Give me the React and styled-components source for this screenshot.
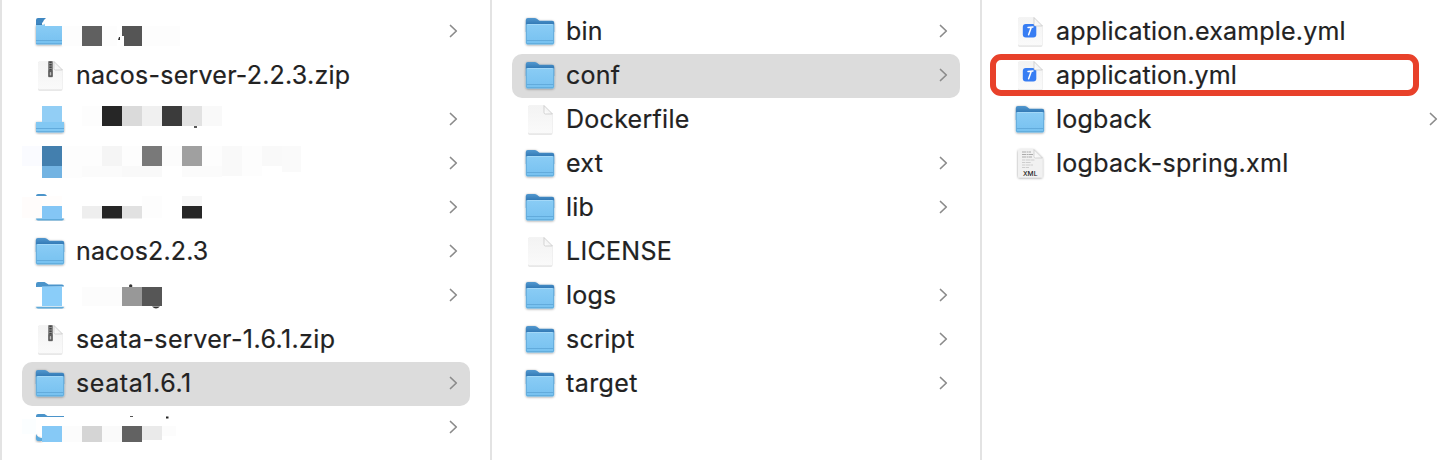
import React from "react";
import styled, { createGlobalStyle } from "styled-components";

const GlobalStyle = createGlobalStyle`
  * { box-sizing: border-box; }
  body { margin: 0; background: #fff; overflow: hidden; }
`;

const Browser = styled.main`
  display: grid;
  grid-template-columns: 490px 490px 490px;
  width: 1448px;
  height: 460px;
  overflow: hidden;
  background: #fff;
  color: #222;
  font-family: Inter, "Liberation Sans", sans-serif;
`;

const Column = styled.section`
  display: flex;
  flex-direction: column;
  padding: 10px 20px 0;
  border-left: 2px solid #e3e3e3;
`;

const Row = styled.div`
  position: relative;
  display: flex;
  flex: none;
  align-items: center;
  height: 44px;
  padding: 0 11px 0 12px;
  border-radius: 10px;
  background: ${(p) => (p.$selected ? "#dcdcdc" : "transparent")};
`;

const Icon = styled.svg`
  flex: none;
  width: 32px;
  height: 44px;
  overflow: visible;
`;

const Label = styled.span`
  margin-left: 10px;
  padding-bottom: 2px;
  font-size: 25px;
  font-weight: 400;
  line-height: 42px;
  letter-spacing: ${(p) => p.$spacing ?? 0.24}px;
  white-space: nowrap;
  -webkit-text-stroke: 0.2px #222;
`;

const Arrow = styled.svg`
  flex: none;
  width: 10px;
  height: 16px;
  margin-left: auto;
  margin-bottom: 2px;
`;

const Redacted = styled.svg`
  flex: none;
  width: 300px;
  height: 44px;
  margin-left: -12px;
`;

const Outline = styled.div`
  position: absolute;
  top: 0;
  left: -12px;
  width: 429px;
  height: 42px;
  border: 6px solid #e8412a;
  border-radius: 11px;
`;

const Gradients = styled.svg`
  position: absolute;
  width: 0;
  height: 0;
`;

const Defs = () => (
  <Gradients aria-hidden="true">
    <defs>
      <linearGradient id="front" x1="0" y1="0" x2="0" y2="1">
        <stop offset="0" stopColor="#8accf5" />
        <stop offset="1" stopColor="#76c1f0" />
      </linearGradient>
      <linearGradient id="back" x1="0" y1="0" x2="0" y2="1">
        <stop offset="0" stopColor="#5298cf" />
        <stop offset=".45" stopColor="#3279b5" />
      </linearGradient>
      <linearGradient id="paper" x1="0" y1="0" x2="0" y2="1">
        <stop offset="0" stopColor="#f3f3f3" />
        <stop offset="1" stopColor="#fafafa" />
      </linearGradient>
      <linearGradient id="fold" x1="0" y1="1" x2="1" y2="0">
        <stop offset="0" stopColor="#ffffff" />
        <stop offset="0.5" stopColor="#f2f2f2" />
        <stop offset="0.52" stopColor="#ffffff" />
      </linearGradient>
      <filter id="shade" x="-20%" y="-20%" width="140%" height="140%">
        <feDropShadow dx="0" dy="0.6" stdDeviation="0.8" floodColor="#000" floodOpacity="0.42" />
      </filter>
      <filter id="softShade" x="-20%" y="-20%" width="140%" height="140%">
        <feDropShadow dx="0" dy="0.5" stdDeviation="0.7" floodColor="#000" floodOpacity="0.36" />
      </filter>
    </defs>
  </Gradients>
);

const FolderIcon = () => (
  <Icon viewBox="0 0 32 44">
    <g filter="url(#shade)">
      <path d="M1.800 10q0-2 2-2h6.700q1.500 0 2.700 1l1.500 1.200q.8.500 2 .5H28.200q2 0 2 2V22H1.800z" fill="url(#back)" />
      <rect x="1.800" y="14" width="28.400" height="20.500" rx="1.800" fill="url(#front)" />
    </g>
    <path d="M2.500 15v18M29.500 15v18" stroke="#62a9d9" strokeWidth=".8" />
    <path d="M3.500 14.500h25" stroke="#a3d8f8" strokeWidth="1" />
    <path d="M2.500 30.500h27" stroke="#62abdc" strokeWidth="1" />
    <path d="M2.500 33.700h27" stroke="#5faad9" strokeWidth="1" />
  </Icon>
);

const DocumentIcon = ({ kind }) => (
  <Icon viewBox="0 0 32 44">
    <path
      d="M5.500 7.500H20L28.500 16V34q0 1.500-1.500 1.500H5.500Q4 35.500 4 34V9q0-1.500 1.500-1.500z"
      fill={kind === "xml" ? "#f1f1f1" : "url(#paper)"}
      filter={kind === "xml" ? "url(#shade)" : "url(#softShade)"}
    />
    {kind === "zip" && (
      <g>
        <rect x="14" y="7" width="5" height="16.300" rx="1" fill="#8a8a8a" />
        <path d="M16.500 7.500v9" stroke="#444" strokeWidth="2.400" strokeDasharray="1.500 1" />
        <rect x="14.500" y="16" width="4" height="7" rx="1" fill="#5e5e5e" />
        <rect x="15.800" y="18" width="1.400" height="3.500" rx=".7" fill="#bbb" />
      </g>
    )}
    {kind === "xml" && (
      <g>
        <path d="M8 10h9M8 12.500h11M8 15h10" stroke="#ababab" strokeWidth="1" strokeDasharray="4 .6 2 .4" />
        <path d="M8 18h13M8 20.500h9M8 23h11M8 25.500h7" stroke="#cdcdcd" strokeWidth="1" strokeDasharray="3 .6 5 .5" />
        <text x="16.200" y="34" textAnchor="middle" fontFamily="Inter, sans-serif" fontSize="6.600" fontWeight="500" fill="#222">XML</text>
      </g>
    )}
    {kind === "yml" && (
      <g>
        <rect x="8.800" y="14" width="13.500" height="13.500" rx="3" fill="#377df3" />
        <path d="M14 17.500l5-.6M17.300 17.200l-2.700 7.600" stroke="#fff" strokeWidth="1.500" strokeLinecap="round" />
      </g>
    )}
    <path d="M20 7.500V14.500q0 1.500 1.500 1.500h7z" fill="url(#fold)" stroke="#c4c4c4" strokeWidth=".7" />
  </Icon>
);

const Chevron = () => (
  <Arrow viewBox="0 0 10 16">
    <path d="M1.500 2.500L7.300 8l-5.800 5.500" fill="none" stroke="#8b8b8b" strokeWidth="1.700" strokeLinecap="round" strokeLinejoin="round" />
  </Arrow>
);

/* Each pixelated name is a list of [x, y, width, height, fill] cells inside its row. */
const mosaics = {
  a: {
    under: (
      <g>
        <path d="M14 10q0-2 2-2h8v2l-4 3v4h-6z" fill="#3f87c1" />
        <path d="M14 15h7l2-1v2h17v18.500H15q-1 0-1-1z" fill="url(#front)" filter="url(#shade)" />
        <path d="M14 30.500h26M14 33.700h26" stroke="#62abdc" />
        <path d="M25 7q-3 2-5 7h1l2-1v3h20V7z" fill="#fff" />
        <path d="M96 30l1-3h1v3z" fill="#333" />
      </g>
    ),
    cells: [[40, 16, 20, 20, "#fdfdfd"], [60, 16, 20, 20, "#606060"], [80, 16, 15, 20, "#fdfdfd"], [100, 16, 20, 20, "#555555"], [100, 26, 2, 10, "#ffffff"], [120, 16, 38, 20, "#fdfdfd"]],
  },
  b: {
    under: (
      <g>
        <path d="M14 24h28v8.500q0 2-2 2H16q-2 0-2-2z" fill="#82c8f3" filter="url(#shade)" />
        <path d="M14 30.500h28M14 33.700h28" stroke="#62abdc" />
        <path d="M172 29h3" stroke="#222" strokeWidth="1.500" />
      </g>
    ),
    cells: [[20, 8, 20, 16, "#92cef5"], [60, 8, 20, 20, "#fdfdfd"], [80, 8, 20, 20, "#262626"], [100, 8, 20, 20, "#dadada"], [120, 8, 20, 20, "#f0f0f0"], [140, 8, 20, 20, "#3b3b3b"], [160, 8, 20, 20, "#e2e2e2"], [180, 8, 20, 20, "#f9f9f9"]],
  },
  c: {
    cells: [[0, 4, 20, 20, "#fafbff"], [20, 4, 20, 20, "#437fae"], [20, 24, 20, 12, "#72b3e2"], [40, 4, 40, 20, "#fdfdfd"], [80, 4, 20, 20, "#f5f5f5"], [100, 4, 20, 20, "#fdfdfd"], [120, 4, 20, 20, "#797979"], [140, 4, 20, 20, "#fcfcfc"], [160, 4, 20, 20, "#a0a0a0"], [180, 4, 20, 20, "#fdfdfd"], [200, 4, 20, 30, "#f9f9f9"], [220, 4, 20, 30, "#fdfdfd"], [240, 4, 20, 20, "#f9f9f9"], [260, 4, 19, 26, "#fafafa"], [40, 24, 20, 12, "#fdfdfd"], [60, 24, 40, 11, "#fbfbfb"], [100, 24, 40, 11, "#f9f9f9"], [160, 24, 40, 11, "#fbfbfb"]],
  },
  d: {
    under: (
      <g>
        <path d="M14 10q0-2 2-2h6q2 0 3 2z" fill="#4b94ca" />
        <path d="M14 32.500h28q0 2-2 2H16q-2 0-2-2z" fill="#5faada" filter="url(#shade)" />
      </g>
    ),
    cells: [[0, 11, 20, 21, "#fffcfb"], [20, 10, 20, 10, "#fffdfc"], [20, 20, 20, 13, "#84c6f5"], [60, 20, 20, 12.5, "#eeeeee"], [80, 20, 20, 12.5, "#262626"], [100, 20, 20, 12.5, "#e1e1e1"], [120, 10, 20, 22, "#fdfdfd"], [160, 10, 20, 10, "#f7f7f7"], [160, 20, 20, 12.5, "#262626"]],
  },
  e: {
    under: (
      <g>
        <path d="M14 13v-3q0-2 2-2h6.500l4 2.500H40q2 0 2 2z" fill="#4b94ca" />
        <path d="M14 32.500h28q0 2-2 2H16q-2 0-2-2z" fill="#5faada" filter="url(#shade)" />
        <path d="M14 32h28" stroke="#fff" />
        <circle cx="108.700" cy="12" r="1.700" fill="#333" />
        <path d="M130 32.500q4 4 8 0" fill="#333" />
      </g>
    ),
    cells: [[20, 12.5, 20, 19.5, "#8acdf9"], [60, 13, 40, 19, "#fcfcfc"], [100, 13, 20, 19, "#989898"], [120, 13, 20, 19, "#565656"]],
  },
  f: {
    under: (
      <g>
        <path d="M14 11v-1q0-2 2-2h6.500l3 2H42v1z" fill="#4b94ca" />
        <path d="M14 28q2 4 6 4v3h-4q-2 0-2-2z" fill="#5ca9dc" filter="url(#shade)" />
        <path d="M108 10.500h3" stroke="#555" strokeWidth="1" />
        <path d="M144 11.500h2.500" stroke="#222" strokeWidth="2" />
      </g>
    ),
    cells: [[0, 13, 14, 15, "#fbfeff"], [20, 20, 20, 16, "#86c9f6"], [16, 18, 4, 12, "#ffffff"], [40, 20, 20, 16, "#fcfcfc"], [60, 20, 20, 16, "#d5d5d5"], [80, 20, 20, 16, "#fafafa"], [100, 20, 20, 16, "#626262"], [120, 20, 20, 14, "#eaeaea"], [140, 20, 14, 10, "#fcfcfc"]],
  },
};

const Mosaic = ({ name }) => (
  <Redacted viewBox="0 0 300 44">
    {mosaics[name].under}
    {mosaics[name].cells.map(([x, y, w, h, fill]) => (
      <rect key={`${x}-${y}`} x={x} y={y} width={w} height={h} fill={fill} />
    ))}
  </Redacted>
);

const columns = [
  [
    { mosaic: "a" },
    { name: "nacos-server-2.2.3.zip", kind: "zip" },
    { mosaic: "b" },
    { mosaic: "c" },
    { mosaic: "d" },
    { name: "nacos2.2.3", spacing: 0.15 },
    { mosaic: "e" },
    { name: "seata-server-1.6.1.zip", kind: "zip", spacing: 0.41 },
    { name: "seata1.6.1", selected: true, spacing: 0.58 },
    { mosaic: "f" },
  ],
  [
    { name: "bin" },
    { name: "conf", selected: true },
    { name: "Dockerfile", kind: "plain", spacing: 0.28 },
    { name: "ext" },
    { name: "lib" },
    { name: "LICENSE", kind: "plain", spacing: 0.3 },
    { name: "logs" },
    { name: "script", spacing: 0.3 },
    { name: "target", spacing: 0.42 },
  ],
  [
    { name: "application.example.yml", kind: "yml", spacing: 0.2 },
    { name: "application.yml", kind: "yml", outlined: true, spacing: 0.17 },
    { name: "logback" },
    { name: "logback-spring.xml", kind: "xml", spacing: 0.27 },
  ],
];

const Entry = ({ item }) => (
  <Row $selected={item.selected}>
    {item.mosaic ? (
      <Mosaic name={item.mosaic} />
    ) : (
      <>
        {item.kind ? <DocumentIcon kind={item.kind} /> : <FolderIcon />}
        <Label $spacing={item.spacing}>{item.name}</Label>
      </>
    )}
    {!item.kind && <Chevron />}
    {item.outlined && <Outline />}
  </Row>
);

export default function App() {
  return (
    <>
      <GlobalStyle />
      <Defs />
      <Browser>
        {columns.map((items, i) => (
          <Column key={i}>
            {items.map((item, j) => (
              <Entry key={j} item={item} />
            ))}
          </Column>
        ))}
      </Browser>
    </>
  );
}
